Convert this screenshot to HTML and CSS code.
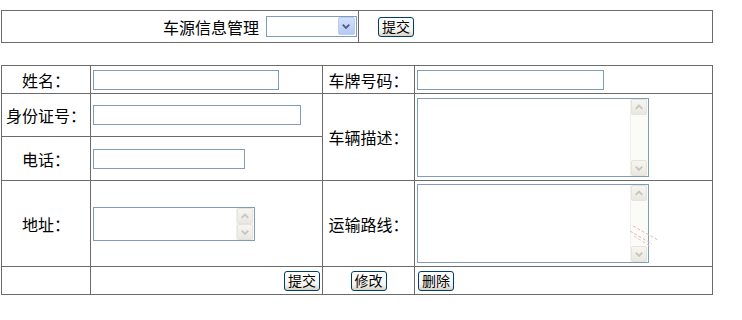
FILE: index.html
```html
<!DOCTYPE html>
<html lang="zh-CN">
  <head>
    <meta charset="UTF-8" />
    <meta name="viewport" content="width=device-width, initial-scale=1.0" />
    <title>车源信息管理</title>
    <link rel="stylesheet" href="styles.css">
  </head>
  <body>
    <div class="bar">
      <div class="bar-cell bar-left">
        <span>车源信息管理</span>
        <div class="combo">
          <select class="combo-input"></select>
          <span class="combo-btn">
            <svg width="17" height="18" viewBox="0 0 17 18"><polyline points="5,7.5 8.5,11 12,7.5" fill="none" stroke="#4d6185" stroke-width="2" /></svg>
          </span>
        </div>
      </div>
      <div class="bar-cell bar-right">
        <button class="btn">提交</button>
      </div>
    </div>

    <div class="form">
      <div class="cell label">姓名：</div>
      <div class="cell field"><input class="text w186" type="text" /></div>
      <div class="cell label">车牌号码：</div>
      <div class="cell field"><input class="text w187" type="text" /></div>

      <div class="cell label">身份证号：</div>
      <div class="cell field"><input class="text w208" type="text" /></div>
      <div class="cell label span2">车辆描述：</div>
      <div class="cell field span2">
        <div class="memo memo-big">
          <textarea></textarea>
          <div class="scroll">
            <span class="scroll-btn"><svg width="15" height="14" viewBox="0 0 15 14"><polyline points="4,9 7.5,5.5 11,9" fill="none" stroke="#c6c6be" stroke-width="2" /></svg></span>
            <span class="scroll-track"></span>
            <span class="scroll-btn"><svg width="15" height="14" viewBox="0 0 15 14"><polyline points="4,5.5 7.5,9 11,5.5" fill="none" stroke="#c6c6be" stroke-width="2" /></svg></span>
          </div>
        </div>
      </div>

      <div class="cell label">电话：</div>
      <div class="cell field"><input class="text w152" type="text" /></div>

      <div class="cell label">地址：</div>
      <div class="cell field">
        <div class="memo memo-small">
          <textarea></textarea>
          <div class="scroll">
            <span class="scroll-btn"><svg width="15" height="14" viewBox="0 0 15 14"><polyline points="4,9 7.5,5.5 11,9" fill="none" stroke="#c6c6be" stroke-width="2" /></svg></span>
            <span class="scroll-btn"><svg width="15" height="14" viewBox="0 0 15 14"><polyline points="4,5.5 7.5,9 11,5.5" fill="none" stroke="#c6c6be" stroke-width="2" /></svg></span>
          </div>
        </div>
      </div>
      <div class="cell label">运输路线：</div>
      <div class="cell field">
        <div class="memo memo-big">
          <textarea></textarea>
          <div class="scroll">
            <span class="scroll-btn"><svg width="15" height="14" viewBox="0 0 15 14"><polyline points="4,9 7.5,5.5 11,9" fill="none" stroke="#c6c6be" stroke-width="2" /></svg></span>
            <span class="scroll-track"></span>
            <span class="scroll-btn"><svg width="15" height="14" viewBox="0 0 15 14"><polyline points="4,5.5 7.5,9 11,5.5" fill="none" stroke="#c6c6be" stroke-width="2" /></svg></span>
          </div>
          <!-- 屏幕残影 -->
          <svg class="smear" width="30" height="22" viewBox="0 0 30 22">
            <line x1="3" y1="1" x2="28" y2="15" stroke="#e7b4bc" stroke-dasharray="3 2" />
            <line x1="0" y1="6" x2="22" y2="19" stroke="#e7b4bc" stroke-dasharray="3 2" />
            <line x1="4" y1="11" x2="20" y2="21" stroke="#ecc6cc" stroke-dasharray="3 2" />
          </svg>
        </div>
      </div>

      <div class="cell"></div>
      <div class="cell field right"><button class="btn">提交</button></div>
      <div class="cell label"><button class="btn">修改</button></div>
      <div class="cell field left"><button class="btn">删除</button></div>
    </div>
  </body>
</html>
```

FILE: styles.css
```css
body {
  margin: 0;
  font-family: "Noto Sans CJK SC", "Noto Sans", sans-serif;
  font-size: 16px;
  color: #000;
  background: #fff;
}
.bar,
.form {
  display: grid;
  width: 712px;
  box-sizing: border-box;
  margin-left: 1px;
  border-top: 1px solid #6b6b6b;
  border-left: 1px solid #6b6b6b;
}
.bar {
  margin-top: 10px;
  grid-template-columns: 357px 354px;
  grid-template-rows: 32px;
}
.form {
  margin-top: 22px;
  grid-template-columns: 89px 232px 92px 298px;
  grid-template-rows: 28px 43px 44px 86px 28px;
}
.bar-cell,
.cell {
  box-sizing: border-box;
  border-right: 1px solid #6b6b6b;
  border-bottom: 1px solid #6b6b6b;
  display: flex;
  align-items: center;
}
.bar-left {
  justify-content: flex-end;
  gap: 7px;
  padding-right: 1px;
}
.bar-right {
  padding-left: 19px;
}
.label {
  justify-content: center;
}
.field {
  padding-left: 2px;
}
.field.right {
  justify-content: flex-end;
  padding-right: 2px;
}
.field.left {
  padding-left: 3px;
}
.span2 {
  grid-row: span 2;
}

/* 下拉框 */
.combo {
  display: flex;
  width: 91px;
  height: 21px;
  box-sizing: border-box;
  border: 1px solid #7f9db9;
  background: #fff;
}
.combo-input {
  appearance: none;
  flex: 1;
  min-width: 0;
  border: none;
  background: transparent;
  padding: 0;
  outline: none;
}
.combo-btn {
  width: 17px;
  height: 18px;
  margin: 0 1px 0 0;
  box-sizing: border-box;
  border: 1px solid #bccdf4;
  border-radius: 2px;
  background: linear-gradient(#d3e0fd, #b6c9f6);
  display: flex;
}
.combo-btn svg {
  margin: -1px 0 0 -1px;
}

/* 按钮 */
.btn {
  height: 20px;
  padding: 0 3px;
  box-sizing: border-box;
  border: 1px solid #003c74;
  border-radius: 3px;
  background: linear-gradient(#ffffff, #f4f3ee 70%, #d6d2c4);
  font-family: "Noto Sans CJK SC", sans-serif;
  font-size: 14px;
  line-height: 17px;
  color: #000;
}

/* 输入框 */
.text {
  height: 20px;
  box-sizing: border-box;
  border: 1px solid #7f9db9;
  padding: 0 2px;
  outline: none;
  margin: 0;
}
.w152 { width: 152px; }
.w186 { width: 186px; }
.w187 { width: 187px; }
.w208 { width: 208px; }

.memo {
  position: relative;
  display: flex;
  box-sizing: border-box;
  border: 1px solid #7f9db9;
  background: #fff;
}
.memo-big {
  width: 232px;
  height: 79px;
}
.memo-small {
  width: 162px;
  height: 34px;
}
.memo textarea {
  flex: 1;
  min-width: 0;
  border: none;
  resize: none;
  padding: 0;
  margin: 0;
  outline: none;
}
.scroll {
  width: 17px;
  display: flex;
  flex-direction: column;
  background: #fbfbf8;
  border-left: 1px solid #f1f0ea;
}
.scroll-btn {
  height: 16px;
  margin: 0 1px 0 0;
  box-sizing: border-box;
  border: 1px solid #e4e3dc;
  border-radius: 2px;
  background: linear-gradient(#f6f5f0, #e9e8e0);
  display: flex;
  align-items: center;
  justify-content: center;
}
.scroll-track {
  flex: 1;
}
.smear {
  position: absolute;
  left: 212px;
  top: 40px;
}
```
